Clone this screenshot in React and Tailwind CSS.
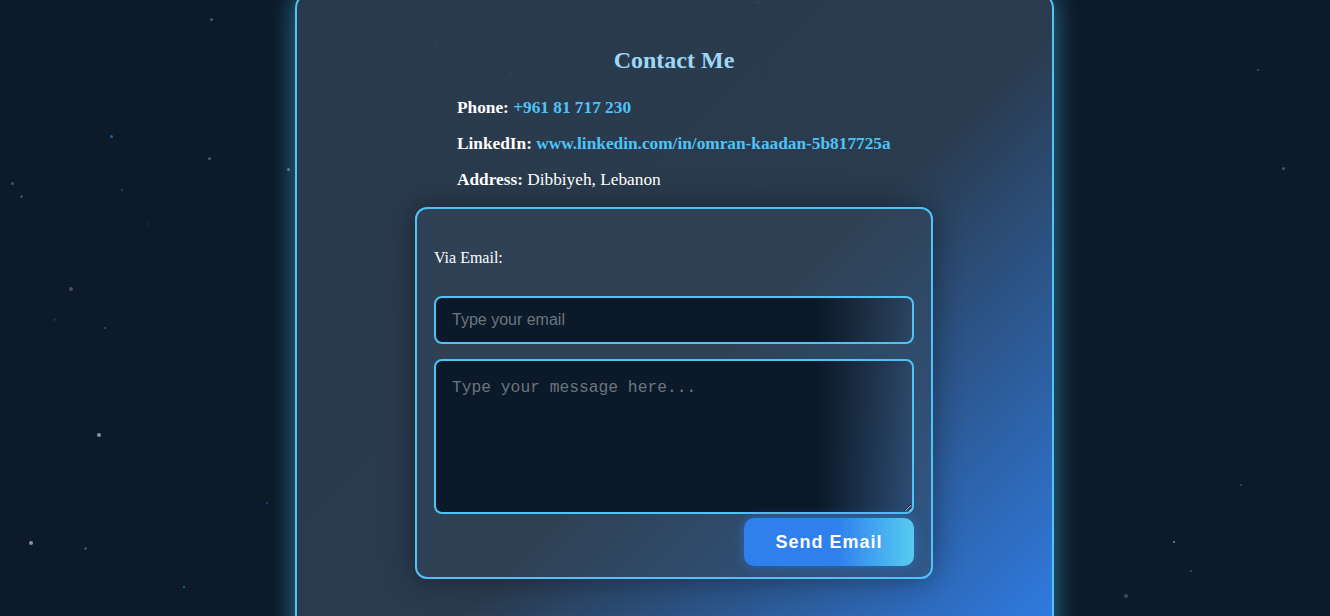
import React from "react";

const stars = [
  [211, 19, 3, "#4b5866"], [111, 136, 3, "#1f5fae"], [209, 158, 3, "#4b5866"],
  [288, 169, 3, "#5f7e96"], [12, 183, 3, "#44505d"], [21, 196, 3, "#3d4956"],
  [122, 190, 2, "#3d4956"], [148, 224, 2, "#13325a"], [71, 289, 4, "#48525e"],
  [54, 319, 3, "#14304f"], [105, 328, 2, "#48525e"], [99, 435, 4, "#8593a0"],
  [267, 503, 2, "#1d4ea0"], [31, 543, 4, "#8a929a"], [85, 548, 3, "#3e4c58"],
  [184, 587, 2, "#1b7c9c"], [1241, 485, 2, "#3e4c58"], [1174, 542, 2, "#7f95a8"],
  [1191, 571, 2, "#45525e"], [1126, 596, 4, "#3f4b57"], [1258, 70, 2, "#1f5fae"],
  [1283, 168, 3, "#4b5866"], [436, 44, 3, "#34465a"], [511, 73, 3, "#34465a"],
  [940, 87, 3, "#34465a"], [960, 419, 3, "#3b5677"], [757, 2, 3, "#3a4a5c"],
];

export default function App() {
  return (
    <div className="relative h-[616px] w-full overflow-hidden bg-[#0c1a29]">
      {stars.map(([x, y, s, c], i) => (
        <span
          key={i}
          className="absolute rounded-full z-20 pointer-events-none"
          style={{ left: x - s / 2, top: y - s / 2, width: s, height: s, background: c, opacity: x > 300 && x < 1050 ? 0.6 : 1 }}
        />
      ))}
      <div className="flex justify-center pl-[18px]">
        <div
          className="-mt-2 w-[759px] min-h-[680px] rounded-2xl border-2 border-[#4fc3f7] bg-[linear-gradient(135deg,#2a3a4d_0%,#2a3b4e_55%,#2f80ed_100%)] shadow-[0_0_26px_rgba(79,195,247,0.55)] pt-[52px]"
          style={{ fontFamily: '"Liberation Serif", "Times New Roman", serif' }}
        >
          <h2 className="text-center text-[24px] leading-[28px] font-bold text-[#9dd8f6]">Contact Me</h2>
          <div className="mx-auto mt-[24px] flex w-[518px] flex-col gap-4 pl-[42px] text-[17.3px] leading-[20px] text-white">
            <p>
              <b>Phone:</b> <span className="font-bold text-[#4fc3f7]">+961 81 717 230</span>
            </p>
            <p>
              <b>LinkedIn:</b> <span className="font-bold text-[#4fc3f7]">www.linkedin.com/in/omran-kaadan-5b817725a</span>
            </p>
            <p>
              <b>Address:</b> Dibbiyeh, Lebanon
            </p>
          </div>
          <div className="mx-auto mt-[17px] flex w-[518px] flex-col rounded-xl border-2 border-[#4fc3f7] bg-[rgba(52,72,92,0.5)] px-[17px] pt-[17px] pb-[11px] shadow-[0_0_30px_rgba(0,0,0,0.4)]">
            <label className="mt-[23px] block text-[16px] leading-[18px] text-white">Via Email:</label>
            <input
              type="email"
              placeholder="Type your email"
              className="mt-[29px] h-[48px] w-full rounded-lg border-2 border-[#4fc3f7] bg-[linear-gradient(to_right,#0b1929_80%,rgba(11,25,41,0.1)_100%)] px-4 text-[16px] text-white outline-none placeholder:text-[#6c7680]"
              style={{ fontFamily: '"Liberation Sans", Arial, sans-serif' }}
            />
            <textarea
              placeholder="Type your message here..."
              className="mt-[15px] block h-[155px] w-full rounded-lg border-2 border-[#4fc3f7] bg-[linear-gradient(to_right,#0b1929_80%,rgba(11,25,41,0.1)_100%)] px-4 pt-[17px] pb-4 text-[16.3px] leading-[19px] text-white outline-none placeholder:text-[#6c7680]"
              style={{ fontFamily: '"Liberation Mono", "Courier New", monospace' }}
            />
            <div className="mt-1 flex justify-end">
              <button
                className="h-[48px] w-[170px] rounded-[10px] bg-[linear-gradient(to_right,#2f80ed_55%,#56ccf2_100%)] text-[18px] font-bold tracking-[1px] text-white shadow-[0_0_12px_rgba(47,128,237,0.5)]"
                style={{ fontFamily: '"Liberation Sans", Arial, sans-serif' }}
              >
                Send Email
              </button>
            </div>
          </div>
        </div>
      </div>
    </div>
  );
}
